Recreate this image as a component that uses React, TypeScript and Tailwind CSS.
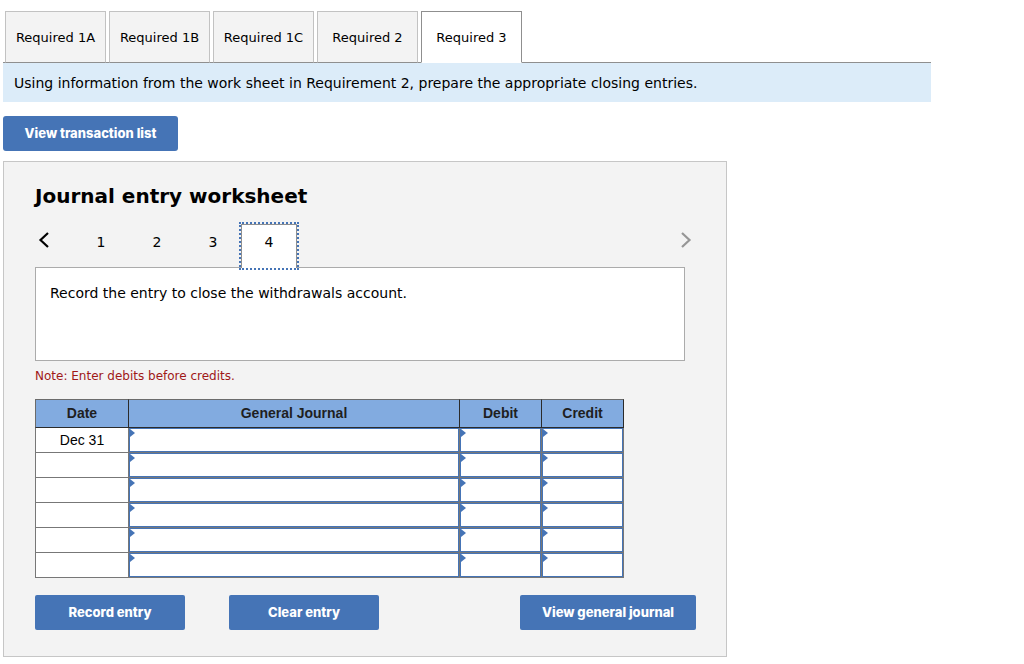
import { useState } from 'react';
import clsx from 'clsx';

const requirements = ['Required 1A', 'Required 1B', 'Required 1C', 'Required 2', 'Required 3'];

const entries = [1, 2, 3, 4];

const columns = ['General Journal', 'Debit', 'Credit'];

const rows = ['Dec 31', '', '', '', '', ''];

interface ActionButtonProps {
  label: string;
  className: string;
}

function ActionButton({ label, className }: ActionButtonProps) {
  return (
    <button
      type="button"
      className={clsx(
        'h-[35px] shrink-0 bg-[#4574b6] font-[Inter,sans-serif] text-[13px] font-extrabold text-white',
        className
      )}
    >
      {label}
    </button>
  );
}

function Chevron({ direction }: { direction: 'left' | 'right' }) {
  return (
    <svg width="12" height="16" viewBox="0 0 12 16" fill="none" stroke="currentColor" strokeWidth="2.2">
      <path d={direction === 'left' ? 'M10 1 L2.5 8 L10 15' : 'M2 1 L9.5 8 L2 15'} />
    </svg>
  );
}

export default function App() {
  const [requirement, setRequirement] = useState('Required 3');
  const [entry, setEntry] = useState(4);

  return (
    <div className="px-[3px] pt-[11px] font-['DejaVu_Sans',Verdana,sans-serif] text-[14px] text-black">
      {/* Requirement tabs */}
      <div className="max-w-[928px]">
        <div role="tablist" className="flex gap-[3px] border-b border-[#8f8f8f] pl-[2px] text-[13px]">
          {requirements.map((name) => (
            <button
              key={name}
              type="button"
              role="tab"
              aria-selected={name === requirement}
              onClick={() => setRequirement(name)}
              className={clsx(
                '-mb-px h-[52px] w-[101px] border pt-[2px] whitespace-nowrap',
                name === requirement
                  ? 'border-[#8f8f8f] border-b-white bg-white'
                  : 'border-[#c2c2c2] border-b-[#8f8f8f] bg-[#f3f3f3]'
              )}
            >
              {name}
            </button>
          ))}
        </div>
        <p className="bg-[#dcecf9] px-[11px] pt-[11px] pb-[9px] leading-[19px]">
          Using information from the work sheet in Requirement 2, prepare the appropriate closing entries.
        </p>
      </div>

      <ActionButton label="View transaction list" className="mt-[14px] w-[175px] rounded-[3px]" />

      {/* Journal entry worksheet */}
      <main className="mt-[10px] max-w-[724px] border border-[#c6c6c6] bg-[#f3f3f3] pt-[21px] pr-[30px] pb-[26px] pl-[31px]">
        <h1 className="text-[20px] leading-[27px] font-bold">Journal entry worksheet</h1>

        <nav className="mt-[14px] flex items-start">
          <button type="button" aria-label="Previous entry" className="mt-2 mr-[23px] ml-[3px]">
            <Chevron direction="left" />
          </button>
          {entries.map((n) => (
            <button
              key={n}
              type="button"
              onClick={() => setEntry(n)}
              className={clsx(
                'h-11 w-14 pb-2',
                n === entry &&
                  'relative border border-b-0 border-[#8f8f8f] bg-white outline-2 outline-[#4574b6] outline-dotted'
              )}
            >
              {n}
            </button>
          ))}
          <button type="button" aria-label="Next entry" className="mt-2 mr-1 ml-auto text-[#969696]">
            <Chevron direction="right" />
          </button>
        </nav>

        <p className="-mt-px mr-[11px] min-h-[94px] border border-[#ababab] bg-white px-[14px] py-[15px] leading-5">
          Record the entry to close the withdrawals account.
        </p>

        <p className="mt-[5px] text-[12px] leading-5 text-[#a01818]">Note: Enter debits before credits.</p>

        <table className="mt-[13px] w-full max-w-[589px] table-fixed border-separate border-spacing-0 font-['Liberation_Sans',Arial,sans-serif]">
          <colgroup>
            <col className="w-[94px]" />
            <col />
            <col className="w-[82px]" />
            <col className="w-[82px]" />
          </colgroup>
          <thead>
            <tr className="h-[29px] bg-[#82abe0] text-[#1f1f1f]">
              <th scope="col" className="border border-[#2b2b2b] border-t-[#6b6b6b] border-l-[#6b6b6b] p-0">
                Date
              </th>
              {columns.map((column) => (
                <th key={column} scope="col" className="border border-l-0 border-[#2b2b2b] border-t-[#6b6b6b] p-0">
                  {column}
                </th>
              ))}
            </tr>
          </thead>
          <tbody>
            {rows.map((date, index) => (
              <tr key={index} className="h-[25px] bg-white">
                <td className="border border-t-0 border-[#777777] p-0 text-center leading-6">{date}</td>
                {columns.map((column) => (
                  <td key={column} className="border-r border-b border-[#777777] p-0">
                    <div className="relative">
                      <input
                        type="text"
                        aria-label={`${column}, line ${index + 1}`}
                        className="block h-6 w-full border border-[#4574b6] bg-white px-2"
                      />
                      <svg className="absolute top-px left-px" width="5" height="8" viewBox="0 0 5 8">
                        <path d="M0 0 L5 4 L0 8 Z" fill="#4574b6" />
                      </svg>
                    </div>
                  </td>
                ))}
              </tr>
            ))}
          </tbody>
        </table>

        <div className="mt-[17px] flex">
          <ActionButton label="Record entry" className="w-[150px] rounded-[2px]" />
          <ActionButton label="Clear entry" className="ml-11 w-[150px] rounded-[2px]" />
          <ActionButton label="View general journal" className="ml-auto w-44 rounded-[2px]" />
        </div>
      </main>
    </div>
  );
}
